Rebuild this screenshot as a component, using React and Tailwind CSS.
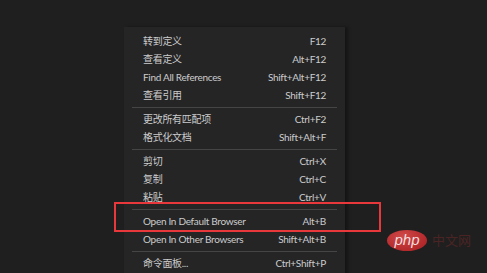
const groups = [
  [
    ['转到定义', 'F12'],
    ['查看定义', 'Alt+F12'],
    ['Find All References', 'Shift+Alt+F12'],
    ['查看引用', 'Shift+F12'],
  ],
  [
    ['更改所有匹配项', 'Ctrl+F2'],
    ['格式化文档', 'Shift+Alt+F'],
  ],
  [
    ['剪切', 'Ctrl+X'],
    ['复制', 'Ctrl+C'],
    ['粘贴', 'Ctrl+V'],
  ],
  [
    ['Open In Default Browser', 'Alt+B'],
    ['Open In Other Browsers', 'Shift+Alt+B'],
  ],
  [['命令面板...', 'Ctrl+Shift+P']],
]

function App() {
  return (
    <main
      className="relative w-[487px] h-[273px] overflow-hidden bg-[#1f1f1f]"
      style={{ fontFamily: 'Lato, "Noto Sans CJK SC", sans-serif' }}
    >
      <div className="absolute left-[124px] top-[27px] w-[221px] h-[260px] bg-[#252526] pt-[5px] shadow-[3px_0_3px_rgba(0,0,0,0.35)]">
        {groups.map((group, gi) => (
          <div key={gi}>
            {gi > 0 ? <div className="mx-[8px] mt-[3px] mb-[2px] h-px bg-[#454545]" /> : null}
            {group.map(([label, keys]) => (
              <div
                key={label}
                className="flex h-[18px] items-center justify-between whitespace-nowrap pl-[19px] pr-[19px] text-[10px] leading-none tracking-[-0.3px] text-[#cccccc]"
              >
                <span>{label}</span>
                <span>{keys}</span>
              </div>
            ))}
          </div>
        ))}
      </div>

      <div className="absolute left-[114px] top-[202px] w-[267px] h-[30px] border-2 border-[#e8383b]" />

      <div className="absolute left-[387px] top-[230px] flex items-center gap-[5px]">
        <div className="flex h-[21px] w-[40px] items-center justify-center rounded-[50%] bg-[radial-gradient(ellipse_at_40%_30%,#d04848,#a81c20)]">
          <span
            className="text-[15px] italic leading-none text-[#f2dede] -mt-[2px]"
            style={{ fontFamily: '"Liberation Sans", sans-serif' }}
          >
            php
          </span>
        </div>
        <span className="text-[13px] leading-none text-[#4a2424]">中文网</span>
      </div>
    </main>
  )
}

export default App
